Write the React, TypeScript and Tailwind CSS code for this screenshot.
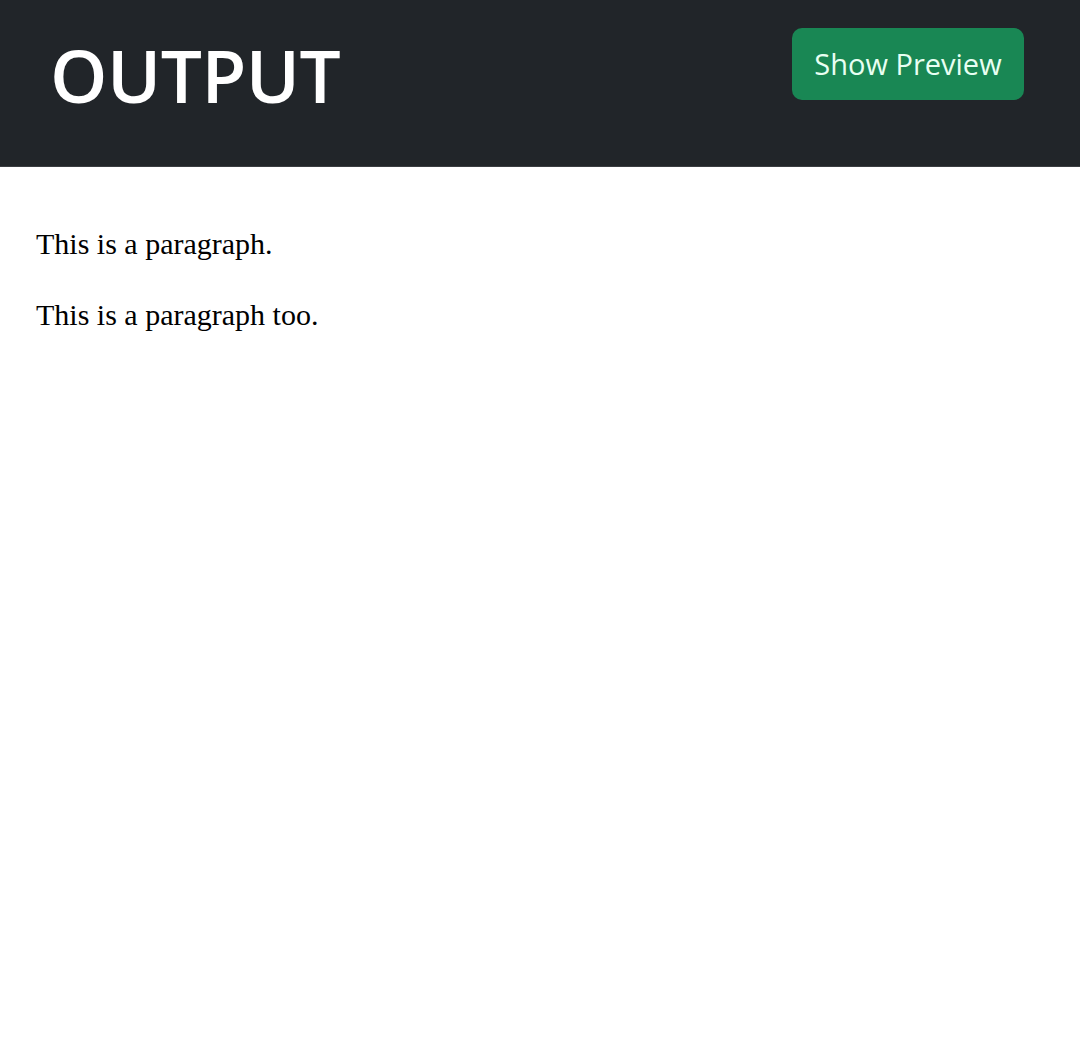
export default function App() {
  return (
    <div className="min-h-screen bg-white">
      <header className="h-[167px] bg-[#212529] border-b border-[#3a3d41]">
        <div className="flex items-start justify-between pl-[50px] pr-[56px] pt-[28px]">
          <h1
            className="text-[73px] font-semibold leading-none text-white pt-[10px] tracking-[-0.5px]"
            style={{ fontFamily: '"Open Sans", sans-serif' }}>
            OUTPUT
          </h1>
          <button
            className="h-[72px] w-[232px] rounded-[10px] bg-[#198754] text-[29px] text-[#e8fff2]"
            style={{ fontFamily: '"Open Sans", sans-serif' }}>
            Show Preview
          </button>
        </div>
      </header>
      <main
        className="px-[36px] pt-[56px] text-[30px] leading-[41px] text-black"
        style={{ fontFamily: '"Liberation Serif", serif' }}>
        <p className="mb-[30px]">This is a paragraph.</p>
        <p>This is a paragraph too.</p>
      </main>
    </div>
  );
}
